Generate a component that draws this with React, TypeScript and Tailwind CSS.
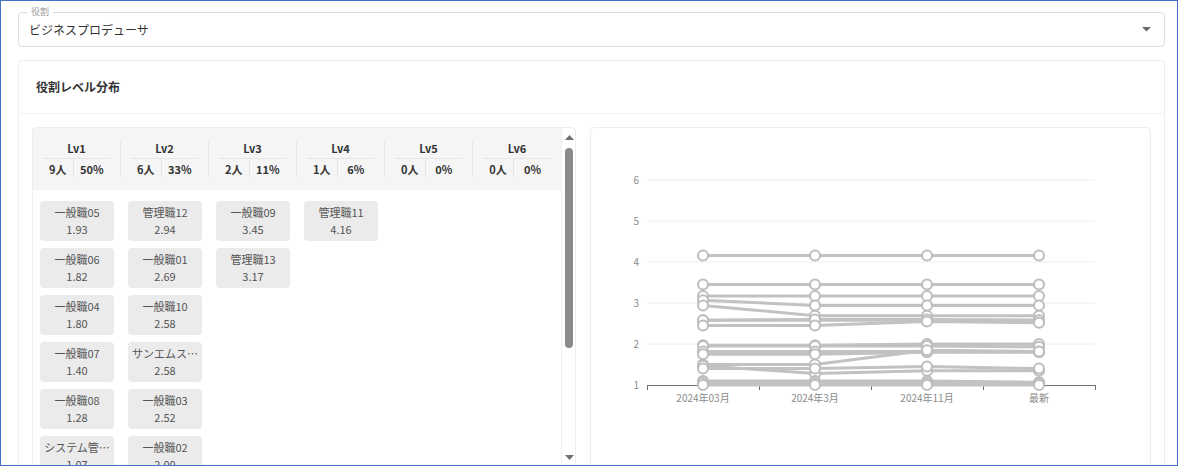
import React from "react";

const levels = [
  { lv: "Lv1", n: "9人", p: "50%" },
  { lv: "Lv2", n: "6人", p: "33%" },
  { lv: "Lv3", n: "2人", p: "11%" },
  { lv: "Lv4", n: "1人", p: "6%" },
  { lv: "Lv5", n: "0人", p: "0%" },
  { lv: "Lv6", n: "0人", p: "0%" },
];

const chips: [string, string][][] = [
  [
    ["一般職05", "1.93"],
    ["一般職06", "1.82"],
    ["一般職04", "1.80"],
    ["一般職07", "1.40"],
    ["一般職08", "1.28"],
    ["システム管…", "1.07"],
    ["一般職14", "1.05"],
  ],
  [
    ["管理職12", "2.94"],
    ["一般職01", "2.69"],
    ["一般職10", "2.58"],
    ["サンエムス…", "2.58"],
    ["一般職03", "2.52"],
    ["一般職02", "2.00"],
  ],
  [
    ["一般職09", "3.45"],
    ["管理職13", "3.17"],
  ],
  [["管理職11", "4.16"]],
  [],
  [],
];

const series: number[][] = [
  [4.16, 4.16, 4.16, 4.16],
  [3.45, 3.45, 3.45, 3.45],
  [3.17, 3.17, 3.17, 3.17],
  [3.07, 2.94, 2.94, 2.94],
  [2.94, 2.69, 2.69, 2.69],
  [2.58, 2.58, 2.58, 2.58],
  [2.58, 2.6, 2.6, 2.58],
  [2.45, 2.45, 2.55, 2.52],
  [1.97, 1.97, 2.0, 2.0],
  [1.95, 1.95, 1.95, 1.93],
  [1.82, 1.82, 1.82, 1.82],
  [1.75, 1.75, 1.8, 1.8],
  [1.5, 1.5, 1.85, 1.82],
  [1.47, 1.28, 1.35, 1.35],
  [1.4, 1.4, 1.45, 1.4],
  [1.1, 1.1, 1.1, 1.07],
  [1.05, 1.05, 1.05, 1.05],
  [1.0, 1.0, 1.0, 1.0],
];

const OX = 591;
const OY = 128;
const xs = [703, 815, 927, 1039].map((x) => x - OX);
const yOf = (v: number) => 385 - (v - 1) * 41 - OY;

function Chart() {
  const left = 647 - OX;
  const right = 1095 - OX;
  return (
    <svg width="559" height="320" className="block">
      {[2, 3, 4, 5, 6].map((v) => (
        <line key={v} x1={left} x2={right} y1={yOf(v)} y2={yOf(v)} stroke="#eceef4" strokeWidth="1" />
      ))}
      {[1, 2, 3, 4, 5, 6].map((v) => (
        <text key={v} x={639 - OX} y={yOf(v) + 3.5} fontSize="10" fill="#8a8a8a" textAnchor="end">
          {v}
        </text>
      ))}
      <line x1={left} x2={right} y1={yOf(1) + 0.5} y2={yOf(1) + 0.5} stroke="#6e7079" strokeWidth="1" />
      {[647, 759, 871, 983, 1095].map((x) => (
        <line key={x} x1={x - OX + 0.5} x2={x - OX + 0.5} y1={yOf(1)} y2={yOf(1) + 5} stroke="#6e7079" strokeWidth="1" />
      ))}
      {["2024年03月", "2024年3月", "2024年11月", "最新"].map((t, i) => (
        <text key={t} x={xs[i]} y={yOf(1) + 17} fontSize="10" fill="#8a8a8a" textAnchor="middle">
          {t}
        </text>
      ))}
      {series.map((s, i) => (
        <polyline
          key={i}
          points={s.map((v, j) => `${xs[j]},${yOf(v)}`).join(" ")}
          fill="none"
          stroke="#c2c2c2"
          strokeWidth="3"
        />
      ))}
      {series.map((s, i) =>
        s.map((v, j) => (
          <circle key={`${i}-${j}`} cx={xs[j]} cy={yOf(v)} r="5" fill="#ffffff" stroke="#bdbdbd" strokeWidth="2" />
        ))
      )}
    </svg>
  );
}

export default function App() {
  return (
    <div className="w-[1178px] h-[466px] border border-[#4472c4] bg-white overflow-hidden font-['Noto_Sans_CJK_JP','Noto_Sans',sans-serif]">
      <div className="pl-[17px] pr-[12px] pt-[11px]">
        <div className="relative h-[35px] border border-[#dedede] rounded-[4px] flex items-center pl-[10px] pr-[13px]">
          <span className="absolute -top-[7px] left-[8px] px-[4px] bg-white text-[9px] leading-[12px] text-[#9a9a9a]">
            役割
          </span>
          <span className="flex-1 text-[12px] text-[#333]">ビジネスプロデューサ</span>
          <svg width="9" height="5" viewBox="0 0 9 5">
            <path d="M0 0 L9 0 L4.5 4.5 Z" fill="#6a6a6a" />
          </svg>
        </div>

        <div className="mt-[13px] border border-[#eeeeee] rounded-[4px] h-[420px]">
          <div className="h-[53px] flex items-center pl-[17px] border-b border-[#f2f2f2]">
            <span className="text-[12px] font-bold text-[#333]">役割レベル分布</span>
          </div>
          <div className="flex gap-[14px] px-[13px] pt-[13px]">
            <div className="w-[544px] h-[360px] border border-[#eeeeee] rounded-[4px] flex overflow-hidden">
              <div className="w-[528px] shrink-0">
                <div className="flex bg-[#f5f5f5] pt-[12px] pb-[12px]">
                  {levels.map((l, i) => (
                    <div key={l.lv} className={`w-[88px] ${i < 5 ? "border-r border-[#e8e8e8]" : ""}`}>
                      <div className="h-[16px] leading-[16px] text-center text-[11px] font-semibold text-[#333]">{l.lv}</div>
                      <div className="mx-[10px] mt-[2px] border-b border-[#e6e6e6]" />
                      <div className="flex mx-[10px] h-[19px] items-center text-[11px] font-semibold text-[#333]">
                        <div className="w-[31px] text-center border-r border-[#e6e6e6] h-full flex items-center justify-center pt-[2px]">
                          {l.n}
                        </div>
                        <div className="w-[37px] text-center h-full flex items-center justify-center pt-[2px]">{l.p}</div>
                      </div>
                    </div>
                  ))}
                </div>
                <div className="flex pt-[11px]">
                  {chips.map((col, i) => (
                    <div key={i} className="w-[88px] pl-[7px] flex flex-col gap-[7px]">
                      {col.map(([name, val]) => (
                        <div
                          key={name}
                          className="w-[74px] h-[40px] rounded-[4px] bg-[#ebebeb] text-center text-[11px] leading-[17px] py-[3px] text-[#555] whitespace-nowrap"
                        >
                          <div>{name}</div>
                          <div>{val}</div>
                        </div>
                      ))}
                    </div>
                  ))}
                </div>
              </div>
              <div className="relative flex-1 border-l border-[#f0f0f0]">
                <svg width="9" height="6" viewBox="0 0 9 6" className="absolute left-[3px] top-[7px]">
                  <path d="M0 5 L9 5 L4.5 0 Z" fill="#707070" />
                </svg>
                <div className="absolute left-[3px] top-[20px] w-[8px] h-[200px] rounded-full bg-[#8a8a8a]" />
                <svg width="9" height="6" viewBox="0 0 9 6" className="absolute left-[3px] top-[327px]">
                  <path d="M0 0 L9 0 L4.5 5 Z" fill="#707070" />
                </svg>
              </div>
            </div>
            <div className="w-[561px] h-[360px] border border-[#eeeeee] rounded-[4px]">
              <Chart />
            </div>
          </div>
        </div>
      </div>
    </div>
  );
}
